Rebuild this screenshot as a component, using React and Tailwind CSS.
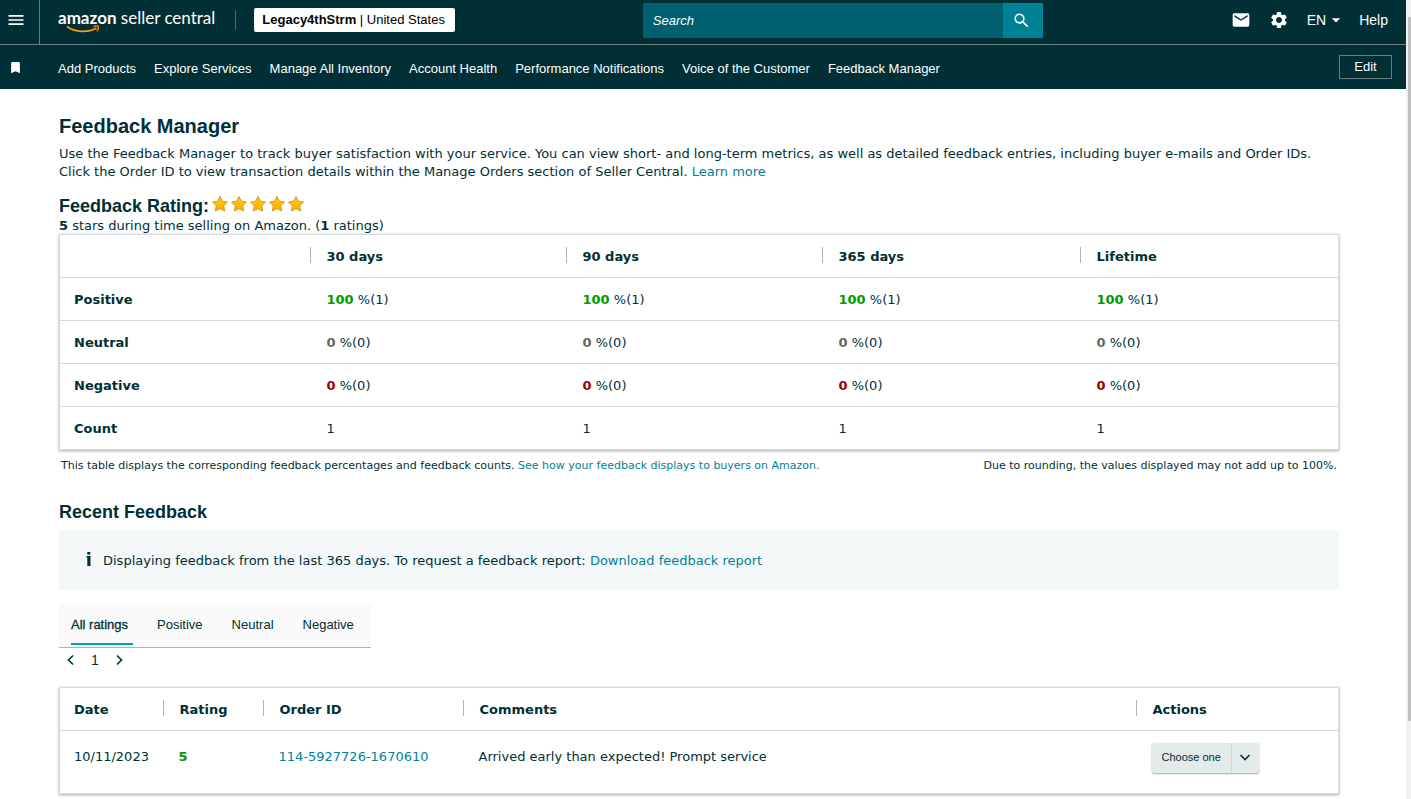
import React, { useState } from "react";
import {
  MdMenu,
  MdSearch,
  MdEmail,
  MdSettings,
  MdArrowDropDown,
  MdBookmark,
} from "react-icons/md";

const navLinks = [
  "Add Products",
  "Explore Services",
  "Manage All Inventory",
  "Account Health",
  "Performance Notifications",
  "Voice of the Customer",
  "Feedback Manager",
];

const periods = ["30 days", "90 days", "365 days", "Lifetime"];

const summaryRows = [
  { label: "Positive", percent: 100, count: 1, color: "text-[#090]" },
  { label: "Neutral", percent: 0, count: 0, color: "text-[#666]" },
  { label: "Negative", percent: 0, count: 0, color: "text-[#900]" },
];

const ratingTabs = ["All ratings", "Positive", "Neutral", "Negative"];

const feedback = [
  {
    date: "10/11/2023",
    rating: 5,
    orderId: "114-5927726-1670610",
    comment: "Arrived early than expected! Prompt service",
  },
];

function Logo() {
  return (
    <a
      href="#home"
      className="relative block h-8 whitespace-nowrap font-['Lato',sans-serif] text-[17px] leading-7 text-white"
    >
      <span className="font-bold">amazon</span> seller central
      <svg
        className="absolute left-2 top-[21px] h-2 w-9"
        viewBox="0 0 36 8"
        fill="none"
        stroke="#f90"
      >
        <path d="M1 1.5C9 7.6 22 8 30.5 3" strokeWidth="1.7" />
        <path d="M27.5 1.6c2-1 4.6-.9 5 0 .3 1-.3 3-1.7 4.4" strokeWidth="1.2" />
      </svg>
    </a>
  );
}

function Star() {
  return (
    <svg className="h-[18px] w-[19px]" viewBox="0 0 19 18">
      <defs>
        <linearGradient id="starFill" x1="0" y1="0" x2="0" y2="1">
          <stop offset="0" stopColor="#ffd21f" />
          <stop offset="0.5" stopColor="#ffbe00" />
          <stop offset="1" stopColor="#f9ac00" />
        </linearGradient>
      </defs>
      <path
        d="M9 1.5l2.3 4.7 5.2.8-3.800 3.800 1 5.200L9 13.500l-4.700 2.500 1-5.200L1.500 7l5.200-.8z"
        fill="url(#starFill)"
        stroke="#d9981c"
        strokeLinejoin="round"
      />
    </svg>
  );
}

function Chevron({ d }) {
  return (
    <svg
      className="h-3 w-3"
      viewBox="0 0 12 12"
      fill="none"
      stroke="#002f36"
      strokeWidth="1.6"
    >
      <path d={d} />
    </svg>
  );
}

// Column title with the short rule on its left
function HeadCell({ width, children }) {
  return (
    <th scope="col" className={`${width} p-0 text-left`}>
      <div className="flex">
        <span className="h-4 border-l border-[#a9b5b7]"></span>
        <span className="pl-4 pt-0.5 leading-4">{children}</span>
      </div>
    </th>
  );
}

function Header() {
  return (
    <header className="bg-[#002f36] font-['Liberation_Sans',Arial,sans-serif] text-white">
      <div className="flex h-[45px] items-stretch justify-between border-b border-[#6b7f80]">
        <div className="flex">
          <button
            aria-label="Menu"
            className="flex w-10 items-center border-r border-[#6b7f80] pb-1 pl-1.5"
          >
            <MdMenu size={20} />
          </button>
          <div className="flex items-center pb-1 pl-[18px]">
            <Logo />
            <span className="ml-5 h-5 border-l border-[#4d6b70]"></span>
            <button className="ml-[18px] h-6 whitespace-nowrap rounded-xs bg-white pl-2 pr-2.5 text-[13px] text-black">
              <b>Legacy4thStrm</b> | United States
            </button>
          </div>
        </div>
        <form className="mt-[3px] flex h-[35px]" onSubmit={(e) => e.preventDefault()}>
          <input
            type="text"
            aria-label="Search"
            placeholder="Search"
            className="w-[360px] bg-[#00606f] px-2.5 text-[13px] italic text-white outline-none placeholder:text-white"
          />
          <button
            aria-label="Submit search"
            className="flex w-10 items-center justify-center bg-[#008296] pr-0.5"
          >
            <MdSearch size={19} />
          </button>
        </form>
        <div className="flex items-center pb-1 pr-[18px] text-sm">
          <a href="#mail" aria-label="Messages">
            <MdEmail size={20} />
          </a>
          <a href="#settings" aria-label="Settings" className="ml-[18px]">
            <MdSettings size={20} />
          </a>
          <button className="ml-[18px] flex items-center">
            EN <MdArrowDropDown size={20} />
          </button>
          <a href="#help" className="ml-[13px]">
            Help
          </a>
        </div>
      </div>
      <nav className="flex h-11 items-center text-[13px]">
        <MdBookmark size={15} className="ml-2 mr-[35px]" />
        <div className="flex gap-[18px] pt-[3px]">
          {navLinks.map((link) => (
            <a key={link} href="#nav" className="whitespace-nowrap">
              {link}
            </a>
          ))}
        </div>
        <button className="ml-auto mr-3.5 h-6 w-[53px] border border-[#6b7f80] text-[13px] leading-5">
          Edit
        </button>
      </nav>
    </header>
  );
}

function SummaryTable() {
  return (
    <table className="w-full table-fixed border border-[#d5dbdb] shadow-[0_1px_3px_rgba(0,0,0,0.35)]">
      <thead>
        <tr className="h-[43px] border-b border-[#d5dbdb]">
          <td className="w-[250px]"></td>
          {periods.map((period, i) => (
            <HeadCell
              key={period}
              width={i === 3 ? "" : i === 2 ? "w-[258px]" : "w-[256px]"}
            >
              {period}
            </HeadCell>
          ))}
        </tr>
      </thead>
      <tbody>
        {summaryRows.map((row) => (
          <tr key={row.label} className="h-[43px] border-b border-[#d5dbdb]">
            <th scope="row" className="pl-3.5 pt-0.5 text-left">
              {row.label}
            </th>
            {periods.map((period) => (
              <td key={period} className="pl-[17px] pt-0.5">
                <b className={row.color}>{row.percent}</b> %({row.count})
              </td>
            ))}
          </tr>
        ))}
        <tr className="h-[43px]">
          <th scope="row" className="pl-3.5 pt-0.5 text-left">
            Count
          </th>
          {periods.map((period) => (
            <td key={period} className="pl-[17px] pt-0.5">
              1
            </td>
          ))}
        </tr>
      </tbody>
    </table>
  );
}

function FeedbackTable() {
  return (
    <table className="mt-[15px] w-full table-fixed border border-[#d5dbdb] shadow-[0_1px_3px_rgba(0,0,0,0.35)]">
      <thead>
        <tr className="h-[43px] border-b border-[#d5dbdb]">
          <th scope="col" className="w-[103px] pl-3.5 pt-0.5 text-left">
            Date
          </th>
          <HeadCell width="w-[100px]">Rating</HeadCell>
          <HeadCell width="w-[200px]">Order ID</HeadCell>
          <HeadCell width="">Comments</HeadCell>
          <HeadCell width="w-[203px]">Actions</HeadCell>
        </tr>
      </thead>
      <tbody>
        {feedback.map((item) => (
          <tr key={item.orderId} className="h-[63px] align-top">
            <td className="pl-3.5 pt-[17px]">{item.date}</td>
            <td className="pl-4 pt-[17px] font-bold text-[#090]">
              {item.rating}
            </td>
            <td className="pl-4 pt-[17px]">
              <a href="#order" className="text-[#008296]">
                {item.orderId}
              </a>
            </td>
            <td className="pl-4 pt-[17px]">{item.comment}</td>
            <td className="pl-4 pt-3">
              <div className="relative h-[30px] w-[107px]">
                <select
                  aria-label="Action"
                  className="h-full w-full appearance-none rounded-xs bg-[#e3eaea] pb-0.5 pl-2.5 font-['Liberation_Sans',Arial,sans-serif] text-[11px] shadow-[0_1px_2px_rgba(0,0,0,0.35)]"
                >
                  <option>Choose one</option>
                </select>
                <span className="pointer-events-none absolute inset-y-0 right-0 flex w-7 items-center justify-center border-l border-[#cdd5d6] pb-0.5">
                  <Chevron d="M1.5 4L6 8.5 10.5 4" />
                </span>
              </div>
            </td>
          </tr>
        ))}
      </tbody>
    </table>
  );
}

export default function App() {
  const [activeTab, setActiveTab] = useState("All ratings");

  return (
    <div className="flex h-screen overflow-hidden bg-white font-['DejaVu_Sans',Verdana,sans-serif] text-[13px] leading-[18px] text-[#002f36]">
      <div className="min-w-0 flex-1">
        <Header />
        <main className="pl-[59px] pr-[67px] pt-[23px]">
          <h1 className="font-['Liberation_Sans',Arial,sans-serif] text-xl font-bold leading-7">
            Feedback Manager
          </h1>
          <p className="pt-[5px]">
            Use the Feedback Manager to track buyer satisfaction with your
            service. You can view short- and long-term metrics, as well as
            detailed feedback entries, including buyer e-mails and Order IDs.
            Click the Order ID to view transaction details within the Manage
            Orders section of Seller Central.{" "}
            <a href="#learn" className="text-[#008296]">
              Learn more
            </a>
          </p>

          <div className="mt-3.5 flex h-[22px]">
            <h2 className="font-['Liberation_Sans',Arial,sans-serif] text-lg font-bold leading-[22px]">
              Feedback Rating:
            </h2>
            <div className="ml-0.5 flex">
              {[1, 2, 3, 4, 5].map((n) => (
                <Star key={n} />
              ))}
            </div>
          </div>
          <p className="leading-[17px]">
            <b>5</b> stars during time selling on Amazon. (<b>1</b> ratings)
          </p>

          <SummaryTable />

          <div className="flex justify-between px-0.5 pt-[7px] text-[11px]">
            <p>
              This table displays the corresponding feedback percentages and
              feedback counts.{" "}
              <a href="#buyers" className="text-[#008296]">
                See how your feedback displays to buyers on Amazon.
              </a>
            </p>
            <p>Due to rounding, the values displayed may not add up to 100%.</p>
          </div>

          <h2 className="mt-[25px] font-['Liberation_Sans',Arial,sans-serif] text-lg font-bold leading-6">
            Recent Feedback
          </h2>
          <div className="mt-1.5 flex h-[60px] items-center bg-[#f4f8f9] pl-[26px]">
            <svg className="mb-0.5 mr-2.5 h-4 w-2" viewBox="0 0 8 16" fill="#002f36">
              <path d="M2.3 1h3v2.6h-3zM1.5 5h4v10H2.3V6.5h-.8z" />
            </svg>
            <p className="pt-0.5">
              Displaying feedback from the last 365 days. To request a feedback
              report:{" "}
              <a href="#report" className="text-[#008296]">
                Download feedback report
              </a>
            </p>
          </div>

          <div className="mt-3.5 flex">
            <div
              role="tablist"
              className="flex h-11 gap-6 border-b border-[#aab7b8] bg-[#fafafa] pl-3 pr-3 font-['Liberation_Sans',Arial,sans-serif]"
            >
              {ratingTabs.map((tab) => (
                <button
                  key={tab}
                  role="tab"
                  aria-selected={tab === activeTab}
                  onClick={() => setActiveTab(tab)}
                  className={
                    tab === activeTab
                      ? "h-[41px] border-b-2 border-[#00a1b3] pr-[5px] pt-0.5 [-webkit-text-stroke:0.3px]"
                      : "h-[41px] border-b-2 border-transparent pr-[5px] pt-0.5"
                  }
                >
                  {tab}
                </button>
              ))}
            </div>
          </div>
          <div className="flex h-6 items-center gap-3.5 pl-1.5 font-['Liberation_Sans',Arial,sans-serif] text-sm">
            <button aria-label="Previous page">
              <Chevron d="M8 1.5L3.5 6 8 10.5" />
            </button>
            <button>1</button>
            <button aria-label="Next page">
              <Chevron d="M4 1.5L8.5 6 4 10.5" />
            </button>
          </div>

          <FeedbackTable />
        </main>
      </div>

      {/* Scroll track */}
      <div className="w-[5px] bg-[#f1f1f1] pl-0.5 pt-[17px]">
        <div className="h-[90%] bg-[#c1c1c1]"></div>
      </div>
    </div>
  );
}
